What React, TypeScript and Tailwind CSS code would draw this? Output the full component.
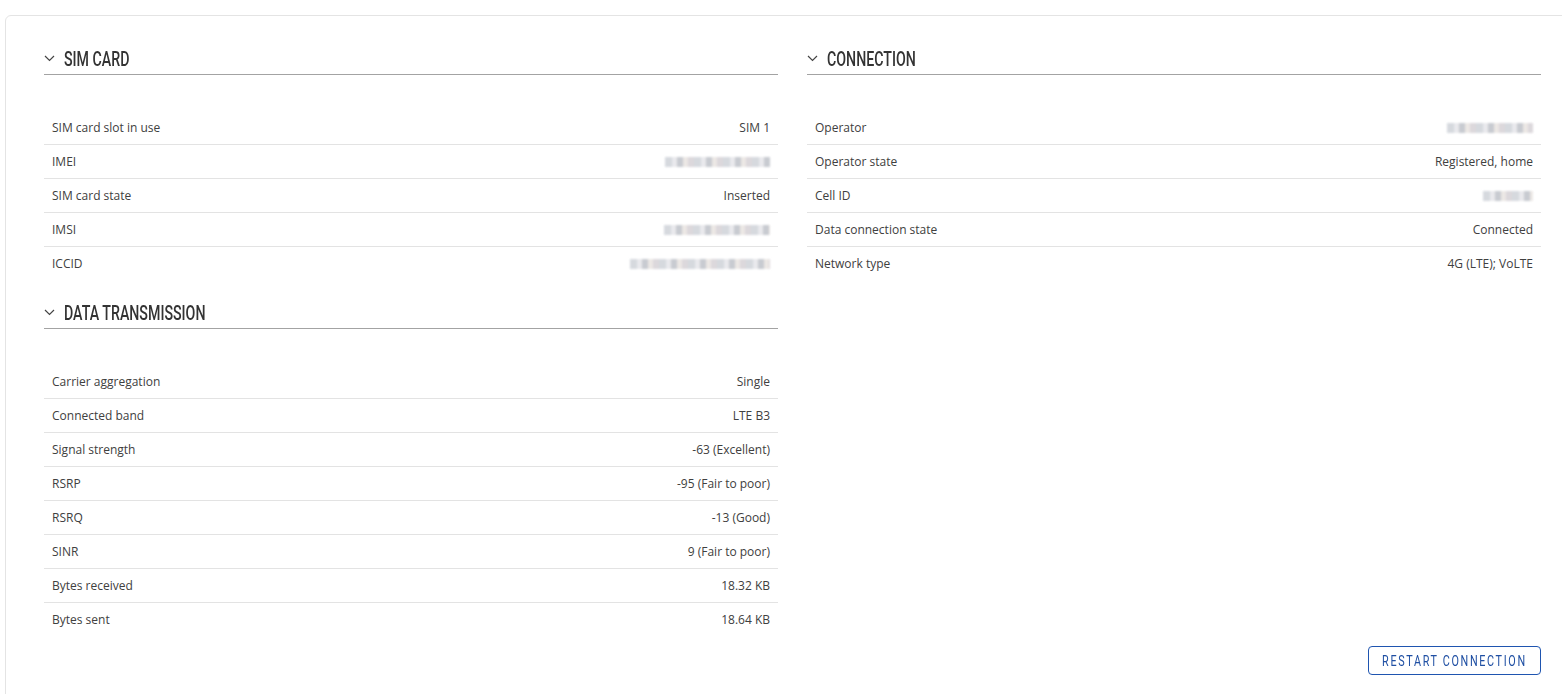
import * as React from "react";

type Row = { label: string; value?: string; blur?: number };

const simRows: Row[] = [
  { label: "SIM card slot in use", value: "SIM 1" },
  { label: "IMEI", blur: 105 },
  { label: "SIM card state", value: "Inserted" },
  { label: "IMSI", blur: 106 },
  { label: "ICCID", blur: 140 },
];

const dataRows: Row[] = [
  { label: "Carrier aggregation", value: "Single" },
  { label: "Connected band", value: "LTE B3" },
  { label: "Signal strength", value: "-63 (Excellent)" },
  { label: "RSRP", value: "-95 (Fair to poor)" },
  { label: "RSRQ", value: "-13 (Good)" },
  { label: "SINR", value: "9 (Fair to poor)" },
  { label: "Bytes received", value: "18.32 KB" },
  { label: "Bytes sent", value: "18.64 KB" },
];

const connRows: Row[] = [
  { label: "Operator", blur: 86 },
  { label: "Operator state", value: "Registered, home" },
  { label: "Cell ID", blur: 50 },
  { label: "Data connection state", value: "Connected" },
  { label: "Network type", value: "4G (LTE); VoLTE" },
];

const condensed = { fontFamily: 'Roboto, "Liberation Sans", sans-serif' };

const Chevron = () => (
  <svg width="11" height="7" viewBox="0 0 11 7" className="shrink-0">
    <path d="M1 1l4.5 4.5L10 1" fill="none" stroke="#444" strokeWidth="1.2" />
  </svg>
);

const Blurred = ({ width }: { width: number }) => (
  <span
    className="inline-block h-[10px] blur-[0.8px] opacity-85"
    style={{
      width,
      background:
        "repeating-linear-gradient(90deg,#cfd3d9 0 7px,#e6e6ea 7px 12px,#bfc2c9 12px 18px,#e9e4e1 18px 23px,#d6d2d6 23px 29px)",
    }}
  />
);

const Section = ({ title, rows }: { title: string; rows: Row[] }) => (
  <div className="mb-[14px]">
    <div className="flex h-[34px] items-center gap-[9px] border-b border-[#a3a3a3] pt-[2px]">
      <Chevron />
      <span
        className="inline-block origin-left scale-x-[0.71] whitespace-nowrap text-[20px] font-medium text-[#333] uppercase"
        style={condensed}
      >
        {title}
      </span>
    </div>
    <div className="mt-[36px]">
      {rows.map((r, i) => (
        <div
          key={r.label}
          className={`flex h-[34px] items-center justify-between px-2 text-[12px] text-[#404040] ${
            i < rows.length - 1 ? "border-b border-[#e3e3e3]" : ""
          }`}
        >
          <span>{r.label}</span>
          {r.blur ? <Blurred width={r.blur} /> : <span>{r.value}</span>}
        </div>
      ))}
    </div>
  </div>
);

export default function App() {
  return (
    <div
      className="h-[694px] w-full overflow-hidden bg-white"
      style={{ fontFamily: '"Open Sans", "Noto Sans", sans-serif' }}
    >
      <div className="mt-[15px] ml-[5px] h-[720px] w-[1600px] rounded-tl-[6px] border border-[#e4e4e4] pt-[25px] pr-[59px] pl-[38px]">
        <div className="grid w-[1497px] grid-cols-2 gap-[29px]">
          <div>
            <Section title="SIM card" rows={simRows} />
            <Section title="Data transmission" rows={dataRows} />
          </div>
          <div className="flex flex-col">
            <Section title="Connection" rows={connRows} />
            <div className="mt-auto flex justify-end">
              <button className="mb-[-24px] flex h-[29px] w-[173px] items-center justify-center overflow-visible rounded-[4px] border border-[#1f55b0] pt-[2px] text-[#1f4fa3]">
                <span
                  className="inline-block shrink-0 scale-x-[0.72] whitespace-nowrap text-[15px] tracking-[2.3px]"
                  style={condensed}
                >
                  RESTART CONNECTION
                </span>
              </button>
            </div>
          </div>
        </div>
      </div>
    </div>
  );
}
